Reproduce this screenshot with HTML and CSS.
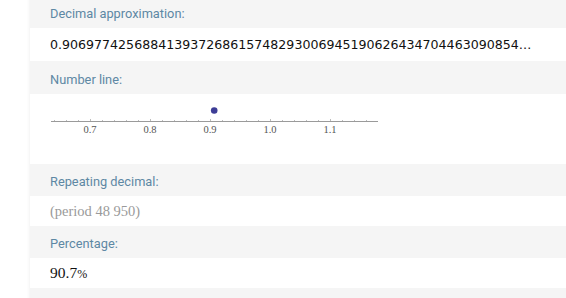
FILE: index.html
```html
<!DOCTYPE html>
<html>
<head>
<meta name="viewport" content="width=device-width, initial-scale=1">
<title>Result pods</title>
<link rel="stylesheet" href="styles.css">
</head>
<body>

<div class="panel">
  <div class="pod">
    <div class="pod-title tall">Decimal approximation:</div>
    <div class="pod-body decimal">0.906977425688413937268615748293006945190626434704463090854…</div>
  </div>

  <div class="pod">
    <div class="pod-title tall">Number line:</div>
    <div class="pod-body numline">
      <svg width="340" height="40" viewBox="0 0 340 40">
        <line x1="1" y1="19.5" x2="328" y2="19.5" stroke="#9a9a9a" stroke-width="1"/>
        <g stroke="#bcbcbc" stroke-width="1">
          <line x1="4.5" y1="18" x2="4.5" y2="19"/>
          <line x1="16.5" y1="18" x2="16.5" y2="19"/>
          <line x1="28.5" y1="18" x2="28.5" y2="19"/>
          <line x1="40.5" y1="17" x2="40.5" y2="19"/>
          <line x1="52.5" y1="18" x2="52.5" y2="19"/>
          <line x1="64.5" y1="18" x2="64.5" y2="19"/>
          <line x1="76.5" y1="18" x2="76.5" y2="19"/>
          <line x1="88.5" y1="18" x2="88.5" y2="19"/>
          <line x1="100.5" y1="17" x2="100.5" y2="19"/>
          <line x1="112.5" y1="18" x2="112.5" y2="19"/>
          <line x1="124.5" y1="18" x2="124.5" y2="19"/>
          <line x1="136.5" y1="18" x2="136.5" y2="19"/>
          <line x1="148.5" y1="18" x2="148.5" y2="19"/>
          <line x1="160.5" y1="17" x2="160.5" y2="19"/>
          <line x1="172.5" y1="18" x2="172.5" y2="19"/>
          <line x1="184.5" y1="18" x2="184.5" y2="19"/>
          <line x1="196.5" y1="18" x2="196.5" y2="19"/>
          <line x1="208.5" y1="18" x2="208.5" y2="19"/>
          <line x1="220.5" y1="17" x2="220.5" y2="19"/>
          <line x1="232.5" y1="18" x2="232.5" y2="19"/>
          <line x1="244.5" y1="18" x2="244.5" y2="19"/>
          <line x1="256.5" y1="18" x2="256.5" y2="19"/>
          <line x1="268.5" y1="18" x2="268.5" y2="19"/>
          <line x1="280.5" y1="17" x2="280.5" y2="19"/>
          <line x1="292.5" y1="18" x2="292.5" y2="19"/>
          <line x1="304.5" y1="18" x2="304.5" y2="19"/>
          <line x1="316.5" y1="18" x2="316.5" y2="19"/>
        </g>
        <g class="tick-label" text-anchor="middle">
          <text x="40" y="31">0.7</text>
          <text x="100" y="31">0.8</text>
          <text x="160" y="31">0.9</text>
          <text x="220" y="31">1.0</text>
          <text x="280" y="31">1.1</text>
        </g>
        <circle cx="164.2" cy="8.5" r="3.3" fill="#3d3d96"/>
      </svg>
    </div>
  </div>

  <div class="pod">
    <div class="pod-title">Repeating decimal:</div>
    <div class="pod-body period">(period 48 950)</div>
  </div>

  <div class="pod">
    <div class="pod-title">Percentage:</div>
    <div class="pod-body percent">90.7<span class="pct">%</span></div>
  </div>

  <div class="pod">
    <div class="pod-title">&nbsp;</div>
  </div>
</div>

</body>
</html>
```

FILE: styles.css
```css
* {box-sizing: border-box;}

body {
  margin: 0;
  background-color: white;
  overflow: hidden;
  font-family: Roboto, "Liberation Sans", sans-serif;
}

.panel {
  margin-left: 30px;
  margin-top: -5px;
  background-color: white;
  box-shadow: 0 0 4px rgba(0, 0, 0, 0.08);
}

/* grey header strip of each pod */
.pod-title {
  background-color: #f5f5f5;
  height: 32px;
  padding: 11px 0 0 20px;
  font-size: 12.8px;
  line-height: 14px;
  color: #5e88a4;
}

.pod-title.tall {
  height: 33px;
  padding-top: 12px;
}

.pod-body {
  padding-left: 20px;
  background-color: white;
}

.decimal {
  height: 33px;
  padding-top: 9px;
  font-family: "DejaVu Sans", sans-serif;
  font-size: 12.6px;
  line-height: 16px;
  color: #111;
  white-space: nowrap;
}

.numline {
  height: 70px;
  padding-top: 8px;
}

.numline svg {
  display: block;
}

.tick-label {
  font-family: "Liberation Serif", serif;
  font-size: 10.5px;
  fill: #555;
}

.period {
  height: 30px;
  padding-top: 7px;
  font-family: "Liberation Serif", serif;
  font-size: 14.5px;
  line-height: 17px;
  color: #9a9a9a;
}

.percent {
  height: 30px;
  padding-top: 6px;
  font-family: "Liberation Serif", serif;
  font-size: 15.5px;
  line-height: 18px;
  color: #111;
}

.pct {
  font-size: 12px;
}
```
